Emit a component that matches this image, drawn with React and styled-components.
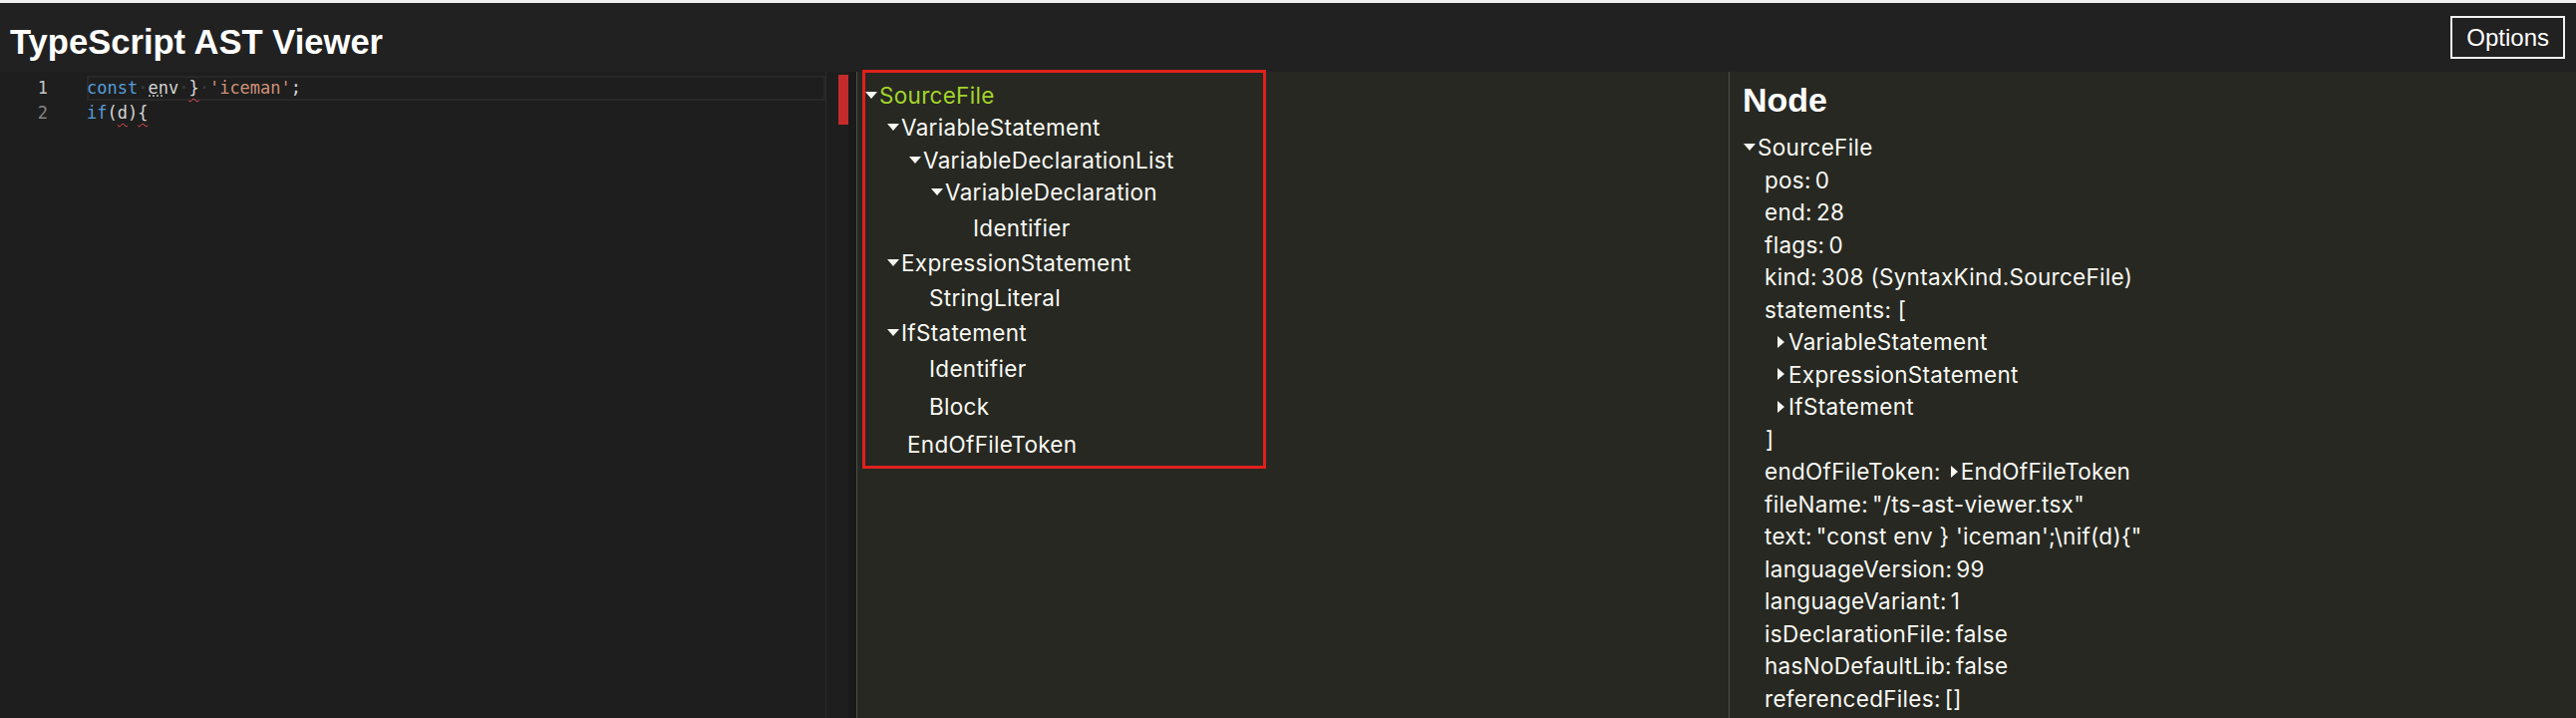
import React from "react";
import styled, { createGlobalStyle } from "styled-components";

const Global = createGlobalStyle`
  html, body { margin: 0; padding: 0; height: 720px; overflow: hidden; background: #1e1e1e; }
  #root { height: 720px; }
`;

const Page = styled.div`
  height: 720px;
  display: flex;
  flex-direction: column;
  border-top: 3px solid #efefef;
  box-sizing: border-box;
  font-family: "Liberation Sans", Arial, sans-serif;
`;

const Header = styled.header`
  height: 69px;
  flex: none;
  display: flex;
  align-items: center;
  justify-content: space-between;
  padding: 0 11px 0 10px;
  background: #212121;
`;

const Title = styled.h1`
  margin: 0;
  padding-top: 8px;
  font-family: "Liberation Sans", Arial, sans-serif;
  font-weight: 700;
  font-size: 34.6px;
  line-height: 40px;
  color: #ffffff;
`;

const OptionsButton = styled.button`
  height: 43px;
  padding: 0 14px;
  border: 2px solid #f0f0f0;
  background: transparent;
  color: #ffffff;
  font-family: "Liberation Sans", Arial, sans-serif;
  font-size: 24px;
  line-height: 39px;
  box-sizing: border-box;
`;

const Main = styled.main`
  flex: 1;
  display: flex;
  min-height: 0;
`;

/* ---------- Editor ---------- */
const Editor = styled.section`
  width: 851px;
  flex: none;
  display: flex;
  background: #1e1e1e;
  font-family: "DejaVu Sans Mono", "Liberation Mono", monospace;
  font-size: 17px;
`;

const LineNumbers = styled.div`
  width: 87px;
  flex: none;
  padding-top: 4px;
  box-sizing: border-box;
`;

const LineNumber = styled.div`
  width: 48px;
  height: 25px;
  line-height: 25px;
  text-align: right;
  color: ${(p) => (p.$active ? "#c6c6c6" : "#858585")};
`;

const CodeArea = styled.div`
  flex: 1;
  padding-top: 4px;
`;

const CodeLine = styled.div`
  height: 25px;
  line-height: 25px;
  white-space: pre;
  color: #d4d4d4;
  box-shadow: ${(p) => (p.$current ? "inset 0 0 0 2px #282828" : "none")};
`;

const Kw = styled.span`
  color: #569cd6;
`;
const Str = styled.span`
  color: #ce9178;
`;
const Ws = styled.span`
  color: rgba(227, 228, 226, 0.18);
`;
const Err = styled.span`
  text-decoration: underline wavy #f14c4c;
  text-decoration-thickness: 1px;
  text-underline-offset: 4px;
`;
const Hint = styled.span`
  position: relative;
  &::after {
    content: "";
    position: absolute;
    left: 1px;
    bottom: 1px;
    width: 14px;
    border-bottom: 2px dotted #9a9a9a;
  }
`;

const Ruler = styled.div`
  width: 23px;
  flex: none;
  display: flex;
  justify-content: flex-end;
  align-items: flex-start;
  padding-top: 3px;
  box-sizing: border-box;
  border-left: 1px solid #2a2a2a;
`;

const RulerMark = styled.div`
  width: 10px;
  height: 50px;
  background: #c42b2b;
`;

const Splitter = styled.div`
  width: 8px;
  flex: none;
  background: #1a1a1a;
`;

/* ---------- Tree ---------- */
const TreePane = styled.section`
  width: 875px;
  flex: none;
  box-sizing: border-box;
  background: #272822;
  border-left: 1px solid #50504a;
  padding-left: 5px;
  font-family: Inter, "Liberation Sans", sans-serif;
  font-size: 22.5px;
  letter-spacing: 0.3px;
  color: #f8f8f2;
`;

const TreeFrame = styled.div`
  width: 405px;
  box-sizing: border-box;
  margin-top: -2px;
  border: 3px solid #e0201c;
  padding: 6px 0 3px 0;
`;

const TreeRow = styled.div`
  height: ${(p) => (p.$leaf ? 38 : 32.5)}px;
  display: flex;
  align-items: center;
  padding-left: ${(p) => p.$depth * 22 + (p.$leaf ? 20 : 0)}px;
  color: ${(p) => (p.$selected ? "#a3d42c" : "#f8f8f2")};
  white-space: nowrap;
`;

const DownArrow = styled.span`
  flex: none;
  width: 0;
  height: 0;
  border-left: 6.5px solid transparent;
  border-right: 6.5px solid transparent;
  border-top: 7px solid #f8f8f2;
  margin-right: 2px;
`;

const RightArrow = styled.span`
  display: inline-block;
  flex: none;
  width: 0;
  height: 0;
  border-top: 6px solid transparent;
  border-bottom: 6px solid transparent;
  border-left: 7px solid #f8f8f2;
  margin-right: ${(p) => p.$gap ?? 4}px;
`;

/* ---------- Node ---------- */
const NodePane = styled.section`
  flex: 1;
  background: #272822;
  border-left: 1px solid #50504a;
  padding: 8px 0 0 13px;
  font-family: Inter, "Liberation Sans", sans-serif;
  font-size: 22.5px;
  letter-spacing: 0.3px;
  color: #f8f8f2;
  overflow: hidden;
`;

const NodeTitle = styled.h2`
  margin: 0 0 11.5px 0;
  font-family: "Liberation Sans", Arial, sans-serif;
  font-weight: 700;
  font-size: 34px;
  line-height: 40px;
  letter-spacing: 0;
  color: #ffffff;
`;

const PropRow = styled.div`
  height: 32.5px;
  display: flex;
  align-items: center;
  padding-left: ${(p) => p.$indent}px;
  white-space: pre;
`;

const Value = styled.span`
  margin-left: ${(p) => p.$gap ?? 4}px;
  display: inline-flex;
  align-items: center;
`;

const treeNodes = [
  { label: "SourceFile", depth: 0, open: true, selected: true },
  { label: "VariableStatement", depth: 1, open: true },
  { label: "VariableDeclarationList", depth: 2, open: true },
  { label: "VariableDeclaration", depth: 3, open: true },
  { label: "Identifier", depth: 4 },
  { label: "ExpressionStatement", depth: 1, open: true },
  { label: "StringLiteral", depth: 2 },
  { label: "IfStatement", depth: 1, open: true },
  { label: "Identifier", depth: 2 },
  { label: "Block", depth: 2 },
  { label: "EndOfFileToken", depth: 1 },
];

const props = [
  ["pos:", "0"],
  ["end:", "28"],
  ["flags:", "0"],
  ["kind:", "308 (SyntaxKind.SourceFile)"],
];

const props2 = [
  ["fileName:", '"/ts-ast-viewer.tsx"'],
  ["text:", "\"const env } 'iceman';\\nif(d){\""],
  ["languageVersion:", "99"],
  ["languageVariant:", "1"],
  ["isDeclarationFile:", "false"],
  ["hasNoDefaultLib:", "false"],
  ["referencedFiles:", "[]"],
];

export default function App() {
  return (
    <>
      <Global />
      <Page>
        <Header>
          <Title>TypeScript AST Viewer</Title>
          <OptionsButton>Options</OptionsButton>
        </Header>
        <Main>
          <Editor>
            <LineNumbers>
              <LineNumber $active>1</LineNumber>
              <LineNumber>2</LineNumber>
            </LineNumbers>
            <CodeArea>
              <CodeLine $current>
                <Kw>const</Kw>
                <Ws>·</Ws>
                <Hint>env</Hint>
                <Ws>·</Ws>
                <Err>{"}"}</Err>
                <Ws>·</Ws>
                <Str>'iceman'</Str>;
              </CodeLine>
              <CodeLine>
                <Kw>if</Kw>(<Err>d</Err>)<Err>{"{"}</Err>
              </CodeLine>
            </CodeArea>
            <Ruler>
              <RulerMark />
            </Ruler>
          </Editor>
          <Splitter />
          <TreePane>
            <TreeFrame>
              {treeNodes.map((n, i) => (
                <TreeRow key={i} $depth={n.depth} $leaf={!n.open} $selected={n.selected}>
                  {n.open && <DownArrow />}
                  {n.label}
                </TreeRow>
              ))}
            </TreeFrame>
          </TreePane>
          <NodePane>
            <NodeTitle>Node</NodeTitle>
            <PropRow $indent={1}>
              <DownArrow />
              SourceFile
            </PropRow>
            {props.map(([k, v]) => (
              <PropRow key={k} $indent={22}>
                {k}
                <Value>{v}</Value>
              </PropRow>
            ))}
            <PropRow $indent={22}>statements: [</PropRow>
            {["VariableStatement", "ExpressionStatement", "IfStatement"].map((s) => (
              <PropRow key={s} $indent={35}>
                <RightArrow />
                {s}
              </PropRow>
            ))}
            <PropRow $indent={23}>]</PropRow>
            <PropRow $indent={22}>
              endOfFileToken:
              <Value $gap={10}>
                <RightArrow $gap={3} />
                EndOfFileToken
              </Value>
            </PropRow>
            {props2.map(([k, v]) => (
              <PropRow key={k} $indent={22}>
                {k}
                <Value>{v}</Value>
              </PropRow>
            ))}
          </NodePane>
        </Main>
      </Page>
    </>
  );
}
